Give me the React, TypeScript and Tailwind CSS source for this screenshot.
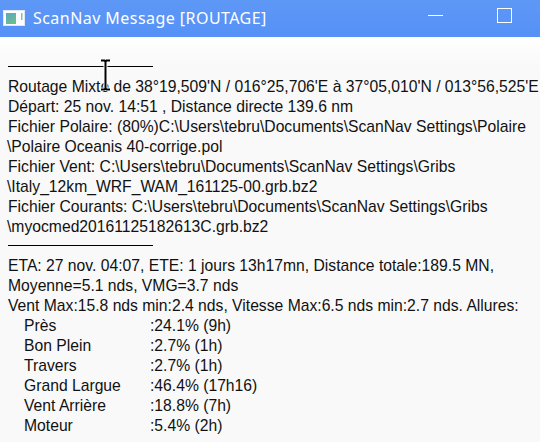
import React from "react";

const rows: [string, string][] = [
  ["Près", ":24.1% (9h)"],
  ["Bon Plein", ":2.7% (1h)"],
  ["Travers", ":2.7% (1h)"],
  ["Grand Largue", ":46.4% (17h16)"],
  ["Vent Arrière", ":18.8% (7h)"],
  ["Moteur", ":5.4% (2h)"],
];

function AppIcon() {
  return (
    <svg width="22" height="16" viewBox="0 0 22 16" className="shrink-0">
      <defs>
        <linearGradient id="g1" x1="0" y1="0" x2="0.6" y2="1">
          <stop offset="0" stopColor="#5aa6c8" />
          <stop offset="1" stopColor="#6cc08a" />
        </linearGradient>
      </defs>
      <rect x="0" y="0" width="22" height="16" fill="#ffffff" />
      <rect x="0.5" y="0.5" width="21" height="15" fill="none" stroke="#dfe8f0" />
      <rect x="3" y="3" width="10" height="11" fill="url(#g1)" />
      <rect x="18" y="3" width="1.5" height="7" fill="#7bbfc0" />
    </svg>
  );
}

export default function App() {
  const font = { fontFamily: '"Liberation Sans", Arial, sans-serif' };
  return (
    <div className="w-[540px] h-[442px] overflow-hidden relative bg-[#f9f9f9]">
      <div className="h-[37px] bg-gradient-to-b from-[#5e98f6] to-[#5591f6] flex items-center relative">
        <div className="ml-[3px] mt-[-1px]">
          <AppIcon />
        </div>
        <div
          className="ml-[8px] text-white text-[16px] tracking-[0.45px] leading-none mt-[-2px] whitespace-nowrap"
          style={{ fontFamily: '"Noto Sans", "Open Sans", sans-serif' }}
        >
          ScanNav Message [ROUTAGE]
        </div>
        <div className="absolute left-[428px] top-[15px] w-[15px] h-px bg-white" />
        <div className="absolute left-[497px] top-[8px] w-[15px] h-[15px] border border-white" />
      </div>
      <div
        className="bg-gradient-to-b from-white to-[#f9f9f9] to-[30px] pt-[29px] text-[15.7px] leading-[20px] text-[#111]"
        style={font}
      >
        <div className="ml-[8px] w-[145px] h-px bg-black" />
        <div className="mt-[10px] pl-[8px] whitespace-nowrap">
          <div>Routage Mixte de 38°19,509'N / 016°25,706'E à 37°05,010'N / 013°56,525'E</div>
          <div>Départ: 25 nov. 14:51 , Distance directe 139.6 nm</div>
          <div>Fichier Polaire: (80%)C:\Users\tebru\Documents\ScanNav Settings\Polaire</div>
          <div className="-ml-px">\Polaire Oceanis 40-corrige.pol</div>
          <div>Fichier Vent: C:\Users\tebru\Documents\ScanNav Settings\Gribs</div>
          <div className="-ml-px">\Italy_12km_WRF_WAM_161125-00.grb.bz2</div>
          <div>Fichier Courants: C:\Users\tebru\Documents\ScanNav Settings\Gribs</div>
          <div className="-ml-px">\myocmed20161125182613C.grb.bz2</div>
        </div>
        <div className="mt-[8px] ml-[8px] w-[145px] h-px bg-black" />
        <div className="mt-[10px] pl-[8px] whitespace-nowrap">
          <div>ETA: 27 nov. 04:07, ETE: 1 jours 13h17mn, Distance totale:189.5 MN,</div>
          <div>Moyenne=5.1 nds, VMG=3.7 nds</div>
          <div>Vent Max:15.8 nds min:2.4 nds, Vitesse Max:6.5 nds min:2.7 nds. Allures:</div>
          {rows.map(([k, v]) => (
            <div key={k} className="flex pl-[16px]">
              <div className="w-[126px]">{k}</div>
              <div>{v}</div>
            </div>
          ))}
        </div>
      </div>
      <svg
        className="absolute left-[100px] top-[59px]"
        width="11"
        height="32"
        viewBox="0 0 11 32"
      >
        <path
          d="M1 1.5 H4.5 L5.5 2.5 L6.5 1.5 H10 M5.5 2.5 V29.5 M1 30.5 H4.5 L5.5 29.5 L6.5 30.5 H10"
          stroke="#ffffff"
          strokeWidth="4"
          fill="none"
        />
        <path
          d="M1 1.5 H4.5 L5.5 2.5 L6.5 1.5 H10 M5.5 2.5 V29.5 M1 30.5 H4.5 L5.5 29.5 L6.5 30.5 H10"
          stroke="#000000"
          strokeWidth="2"
          fill="none"
        />
      </svg>
    </div>
  );
}
